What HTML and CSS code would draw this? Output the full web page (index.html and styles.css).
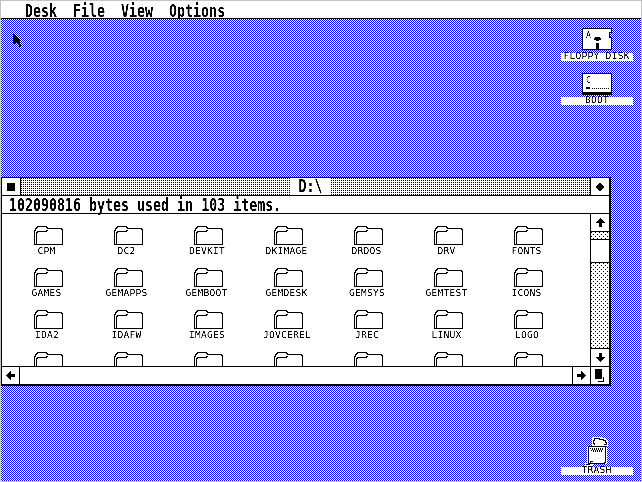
FILE: index.html
```html
<!DOCTYPE html>
<html lang="en">
<head>
    <meta charset="UTF-8">
    <title>GEM Desktop</title>
    <link rel="stylesheet" href="styles.css">
</head>
<body>
    <svg class="defs" width="0" height="0">
        <symbol id="folder" viewBox="0 0 30 19">
            <path d="M.5 17V4.500h1v-2h1v-1h1v-1h9v1h1v1h14v1h1v15H2.500V6.500h1v-1h9v-1h1v-1" fill="#fff" stroke="#000" shape-rendering="crispEdges"/>
            <path d="M.5 17v1h2" fill="none" stroke="#000" shape-rendering="crispEdges"/>
        </symbol>
    </svg>
    <div class="screen">
        <div class="menubar">
            <span class="menu">Desk</span>
            <span class="menu">File</span>
            <span class="menu">View</span>
            <span class="menu">Options</span>
        </div>
        <div class="desktop">
            <svg class="pointer" width="12" height="18" viewBox="0 0 12 18">
                <path d="M1 1h1v1h1v1h1v1h1v1h1v1h1v1h1v1h1v1H7v1h1v2h1v3H7v-2H6v-2H5v-1H4v1H3v1H1z" fill="#000" shape-rendering="crispEdges"/>
            </svg>

            <div class="desk-icon floppy">
                <svg width="30" height="23" viewBox="0 0 30 23">
                    <path d="M.500.500h29v4h-2v5h2v12H.500z" fill="#fff" stroke="#000" shape-rendering="crispEdges"/>
                    <path d="M14 13h3v-1h2v-2h-1V9h-5v1h-1v2h2zM14 15h3v6h-3z" fill="#000" shape-rendering="crispEdges"/>
                    <text x="4" y="10" class="drive-letter">A</text>
                </svg>
                <div class="desk-label"><span class="tiny">FLOPPY DISK</span></div>
            </div>

            <div class="desk-icon boot">
                <svg width="30" height="22" viewBox="0 0 30 22">
                    <path d="M.500.500h29v19H.500z" fill="#fff" stroke="#000" shape-rendering="crispEdges"/>
                    <path d="M0 20h30v2H0zM4 14h4v2H4z" fill="#000" shape-rendering="crispEdges"/>
                    <path d="M10 15.500h17" stroke="#000" stroke-dasharray="1 1" shape-rendering="crispEdges"/>
                    <text x="4" y="10" class="drive-letter">C</text>
                </svg>
                <div class="desk-label"><span class="tiny">BOOT</span></div>
            </div>

            <div class="window">
                <div class="titlebar">
                    <div class="win-btn"><div class="close-box"></div></div>
                    <div class="title-track"><div class="title-text"><span class="tall">D:\</span></div></div>
                    <div class="win-btn">
                        <svg width="8" height="8" viewBox="0 0 8 8"><path d="M3 0h2v1h1v1h1v1h1v2H7v1H6v1H5v1H3V7H2V6H1V5H0V3h1V2h1V1h1z" shape-rendering="crispEdges"/></svg>
                    </div>
                </div>
                <div class="infobar"><span class="tall">102090816 bytes used in 103 items.</span></div>
                <div class="win-body">
                    <div class="files">
                        <div class="file"><svg width="30" height="19"><use href="#folder"/></svg><span class="tiny">CPM</span></div>
                        <div class="file"><svg width="30" height="19"><use href="#folder"/></svg><span class="tiny">DC2</span></div>
                        <div class="file"><svg width="30" height="19"><use href="#folder"/></svg><span class="tiny">DEVKIT</span></div>
                        <div class="file"><svg width="30" height="19"><use href="#folder"/></svg><span class="tiny">DKIMAGE</span></div>
                        <div class="file"><svg width="30" height="19"><use href="#folder"/></svg><span class="tiny">DRDOS</span></div>
                        <div class="file"><svg width="30" height="19"><use href="#folder"/></svg><span class="tiny">DRV</span></div>
                        <div class="file"><svg width="30" height="19"><use href="#folder"/></svg><span class="tiny">FONTS</span></div>
                        <div class="file"><svg width="30" height="19"><use href="#folder"/></svg><span class="tiny">GAMES</span></div>
                        <div class="file"><svg width="30" height="19"><use href="#folder"/></svg><span class="tiny">GEMAPPS</span></div>
                        <div class="file"><svg width="30" height="19"><use href="#folder"/></svg><span class="tiny">GEMBOOT</span></div>
                        <div class="file"><svg width="30" height="19"><use href="#folder"/></svg><span class="tiny">GEMDESK</span></div>
                        <div class="file"><svg width="30" height="19"><use href="#folder"/></svg><span class="tiny">GEMSYS</span></div>
                        <div class="file"><svg width="30" height="19"><use href="#folder"/></svg><span class="tiny">GEMTEST</span></div>
                        <div class="file"><svg width="30" height="19"><use href="#folder"/></svg><span class="tiny">ICONS</span></div>
                        <div class="file"><svg width="30" height="19"><use href="#folder"/></svg><span class="tiny">IDA2</span></div>
                        <div class="file"><svg width="30" height="19"><use href="#folder"/></svg><span class="tiny">IDAFW</span></div>
                        <div class="file"><svg width="30" height="19"><use href="#folder"/></svg><span class="tiny">IMAGES</span></div>
                        <div class="file"><svg width="30" height="19"><use href="#folder"/></svg><span class="tiny">JOVCEREL</span></div>
                        <div class="file"><svg width="30" height="19"><use href="#folder"/></svg><span class="tiny">JREC</span></div>
                        <div class="file"><svg width="30" height="19"><use href="#folder"/></svg><span class="tiny">LINUX</span></div>
                        <div class="file"><svg width="30" height="19"><use href="#folder"/></svg><span class="tiny">LOGO</span></div>
                        <div class="file"><svg width="30" height="19"><use href="#folder"/></svg></div>
                        <div class="file"><svg width="30" height="19"><use href="#folder"/></svg></div>
                        <div class="file"><svg width="30" height="19"><use href="#folder"/></svg></div>
                        <div class="file"><svg width="30" height="19"><use href="#folder"/></svg></div>
                        <div class="file"><svg width="30" height="19"><use href="#folder"/></svg></div>
                        <div class="file"><svg width="30" height="19"><use href="#folder"/></svg></div>
                        <div class="file"><svg width="30" height="19"><use href="#folder"/></svg></div>
                    </div>
                    <div class="vscroll">
                        <div class="arrow-cell">
                            <svg width="9" height="9" viewBox="0 0 9 9"><path d="M3 9V5H0V4h1V3h1V2h1V1h1V0h1v1h1v1h1v1h1v1h1v1H6v4z" shape-rendering="crispEdges"/></svg>
                        </div>
                        <div class="track-top"></div>
                        <div class="thumb"></div>
                        <div class="track"></div>
                        <div class="arrow-cell down">
                            <svg width="9" height="9" viewBox="0 0 9 9"><path d="M3 0v4H0v1h1v1h1v1h1v1h1v1h1V8h1V7h1V6h1V5h1V4H6V0z" shape-rendering="crispEdges"/></svg>
                        </div>
                    </div>
                </div>
                <div class="hscroll">
                    <div class="arrow-cell left">
                        <svg width="9" height="9" viewBox="0 0 9 9"><path d="M9 3H5V0H4v1H3v1H2v1H1v1H0v1h1v1h1v1h1v1h1v1h1V6h4z" shape-rendering="crispEdges"/></svg>
                    </div>
                    <div class="hfill"></div>
                    <div class="arrow-cell right">
                        <svg width="9" height="9" viewBox="0 0 9 9"><path d="M0 3h4V0h1v1h1v1h1v1h1v1h1v1H8v1H7v1H6v1H5v1H4V6H0z" shape-rendering="crispEdges"/></svg>
                    </div>
                    <div class="size-box">
                        <svg width="11" height="13" viewBox="0 0 11 13"><path d="M0 0h7v10H0z" shape-rendering="crispEdges"/><path d="M8.500 8v4.500H3" fill="none" stroke="#000" shape-rendering="crispEdges"/></svg>
                    </div>
                </div>
            </div>

            <div class="desk-icon trash">
                <svg width="30" height="30" viewBox="0 0 30 30">
                    <path d="M10 2h1V1h10v1h3v1h1v2h1v5h-2v1h1v17H11v2H3v-3h2V10h5z" fill="#fff" shape-rendering="crispEdges"/>
                    <path d="M12.500 9V7.500h-1v-3h1v-2h5v1h4v1h2v2h1v2h-3" fill="none" stroke="#000" shape-rendering="crispEdges"/>
                    <path d="M6.500 10.500h17v16h-1v1H6.500z" fill="#fff" stroke="#000" shape-rendering="crispEdges"/>
                    <path d="M8 12.500h14M9 14.500h12" stroke="#000" stroke-dasharray="1 1" shape-rendering="crispEdges"/>
                    <path d="M9 13.500h12M10 15.500h10" stroke="#000" stroke-dasharray="1 1" stroke-dashoffset="1" shape-rendering="crispEdges"/>
                    <path d="M4 28h3v-1h1v-2h3v1H9v2H8v1H4z" fill="#000" shape-rendering="crispEdges"/>
                </svg>
                <div class="desk-label"><span class="tiny">TRASH</span></div>
            </div>
        </div>
    </div>
</body>
</html>
```

FILE: styles.css
```css
html, body {
    margin: 0;
    padding: 0;
    background: #c4c4c4;
}
.defs {
    position: absolute;
}
.screen {
    width: 640px;
    height: 480px;
    margin: 1px;
    overflow: hidden;
    font-family: 'DejaVu Sans Mono', monospace;
    color: #000;
    filter: contrast(3);
}
.tall {
    display: inline-block;
    transform: scaleY(1.3);
}
.tiny {
    display: inline-block;
    letter-spacing: 0.2px;
    transform: scaleX(1.2);
}
.menubar {
    height: 17px;
    background: #fff;
    border-bottom: 1px solid #000;
    display: flex;
    padding-left: 24px;
    font-size: 13.3px;
    font-weight: bold;
    line-height: 20px;
}
.menu {
    margin-right: 16px;
    transform: scaleY(1.3);
}
.desktop {
    position: relative;
    height: 462px;
    background: url("data:image/svg+xml,%3Csvg xmlns='http://www.w3.org/2000/svg' width='2' height='2' shape-rendering='crispEdges'%3E%3Crect width='2' height='2' fill='%23fff'/%3E%3Crect width='1' height='1' fill='%2300f'/%3E%3Crect x='1' y='1' width='1' height='1' fill='%2300f'/%3E%3C/svg%3E");
}
.pointer {
    position: absolute;
    left: 11px;
    top: 13px;
}
.desk-icon {
    position: absolute;
    width: 72px;
    display: flex;
    flex-direction: column;
    align-items: center;
}
.floppy {
    left: 560px;
    top: 9px;
}
.boot {
    left: 560px;
    top: 54px;
}
.trash {
    left: 560px;
    top: 417px;
}
.desk-label {
    width: 72px;
    height: 8px;
    margin-top: 2px;
    background: #fff;
    text-align: center;
    font-size: 8px;
    line-height: 7px;
}
.trash .desk-label {
    margin-top: 1px;
}
.drive-letter {
    font-family: 'DejaVu Sans Mono', monospace;
    font-size: 8px;
}
.window {
    position: absolute;
    left: 0;
    top: 158px;
    width: 607px;
    height: 206px;
    border: 1px solid #000;
    border-right-width: 2px;
    border-bottom-width: 2px;
    background: #fff;
    display: flex;
    flex-direction: column;
}
.titlebar {
    height: 17px;
    flex: none;
    display: flex;
    border-bottom: 1px solid #000;
}
.win-btn {
    width: 18px;
    display: flex;
    align-items: center;
    justify-content: center;
    flex: none;
}
.close-box {
    width: 8px;
    height: 8px;
    background: #000;
}
.title-track {
    flex: 1;
    display: flex;
    justify-content: center;
    padding-left: 10px;
    border-left: 1px solid #000;
    border-right: 1px solid #000;
    background: url("data:image/svg+xml,%3Csvg xmlns='http://www.w3.org/2000/svg' width='2' height='2' shape-rendering='crispEdges'%3E%3Crect width='2' height='2' fill='%23fff'/%3E%3Crect width='1' height='1'/%3E%3C/svg%3E");
}
.title-text {
    width: 40px;
    background: #fff;
    text-align: center;
    font-size: 13.3px;
    font-weight: bold;
    line-height: 17px;
}
.infobar {
    height: 17px;
    flex: none;
    border-bottom: 1px solid #000;
    padding-left: 7px;
    font-size: 13.3px;
    font-weight: bold;
    line-height: 20px;
}
.win-body {
    flex: 1;
    min-height: 0;
    display: flex;
    border-bottom: 1px solid #000;
}
.files {
    flex: 1;
    overflow: hidden;
    display: grid;
    grid-template-columns: repeat(7, 80px);
    grid-auto-rows: 42px;
    padding: 12px 0 0 7px;
}
.file {
    display: flex;
    flex-direction: column;
    align-items: center;
    font-size: 8px;
    line-height: 8px;
}
.file span {
    margin: 3px 4px 0 0;
}
.vscroll {
    width: 18px;
    flex: none;
    border-left: 1px solid #000;
    display: flex;
    flex-direction: column;
}
.arrow-cell {
    height: 17px;
    flex: none;
    display: flex;
    align-items: center;
    justify-content: center;
}
.arrow-cell.down {
    border-top: 1px solid #000;
}
.track-top, .track {
    background: url("data:image/svg+xml,%3Csvg xmlns='http://www.w3.org/2000/svg' width='4' height='4' shape-rendering='crispEdges'%3E%3Crect width='4' height='4' fill='%23fff'/%3E%3Crect width='1' height='1'/%3E%3Crect x='2' y='2' width='1' height='1'/%3E%3C/svg%3E");
}
.track-top {
    height: 7px;
    border-top: 1px solid #000;
    border-bottom: 1px solid #000;
}
.thumb {
    height: 22px;
    border-bottom: 1px solid #000;
}
.track {
    flex: 1;
}
.hscroll {
    height: 17px;
    flex: none;
    display: flex;
}
.hscroll .left {
    width: 17px;
    border-right: 1px solid #000;
}
.hfill {
    flex: 1;
}
.hscroll .right {
    width: 17px;
    border-left: 1px solid #000;
}
.size-box {
    width: 18px;
    border-left: 1px solid #000;
    display: flex;
    align-items: center;
    justify-content: center;
}
```
